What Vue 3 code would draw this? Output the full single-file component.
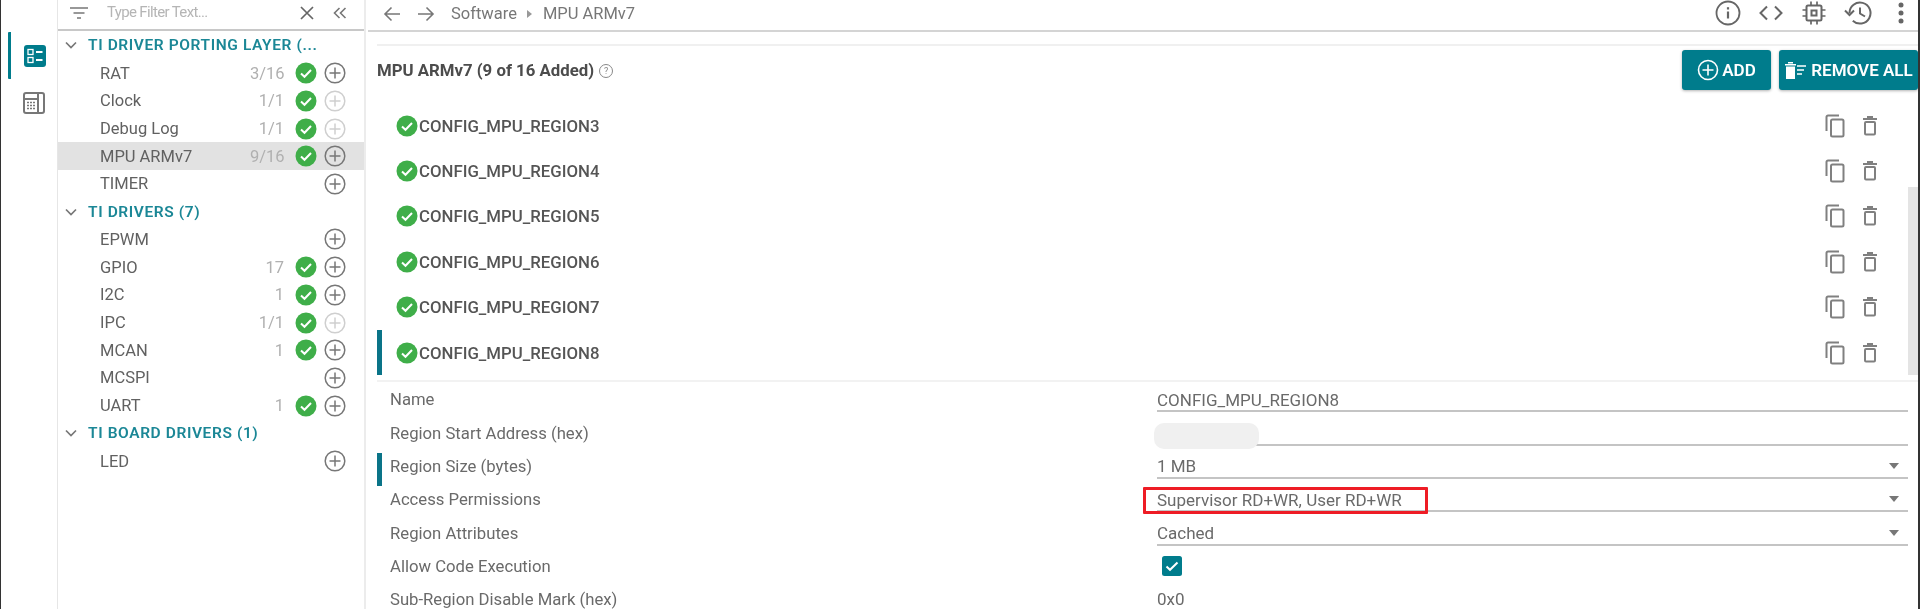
<template>
  <div class="app">
    <nav class="rail">
      <button class="rail-btn active">
        <svg width="26" height="26" viewBox="0 0 26 26">
          <rect x="2" y="2" width="22" height="22" rx="3" fill="#007c8c" />
          <rect x="6" y="6.500" width="5" height="5" fill="none" stroke="#fff" stroke-width="1.300" />
          <rect x="6" y="14.500" width="5" height="5" fill="none" stroke="#fff" stroke-width="1.300" />
          <path d="M14 9h6.500M14 17h6.500" stroke="#fff" stroke-width="1.800" />
        </svg>
      </button>
      <button class="rail-btn">
        <svg width="26" height="26" viewBox="0 0 26 26" fill="none" stroke="#777" stroke-width="2">
          <rect x="3" y="3" width="20" height="20" rx="2" />
          <path d="M17 3v20M3 9h14" />
          <path d="M6 12.500h8M6 15.500h8M6 18.500h8" stroke-width="1.600" stroke-dasharray="2 1" />
        </svg>
      </button>
    </nav>

    <aside class="sidebar">
      <div class="filter">
        <svg class="filter-icon" width="20" height="14" viewBox="0 0 20 14">
          <path d="M1 2h18M4.500 7h11M8 12h4" stroke="#777" stroke-width="1.700" />
        </svg>
        <span class="filter-text">Type Filter Text...</span>
        <svg class="filter-x" width="14" height="14" viewBox="0 0 14 14">
          <path d="M1 1l12 12M13 1L1 13" stroke="#666" stroke-width="1.700" />
        </svg>
        <svg class="filter-collapse" width="14" height="12" viewBox="0 0 14 12" fill="none">
          <path d="M6.500 1L1.500 6l5 5M12.500 1l-5 5 5 5" stroke="#777" stroke-width="1.600" />
        </svg>
      </div>
      <div class="tree">
        <template v-for="group in groups" :key="group.name">
          <div class="tree-head">
            <svg width="12" height="8" viewBox="0 0 12 8" fill="none">
              <path d="M1 1.500l5 5 5-5" stroke="#777" stroke-width="1.700" />
            </svg>
            <span>{{ group.name }}</span>
          </div>
          <div
            v-for="item in group.items"
            :key="item.name"
            class="tree-row"
            :class="{ selected: item.name === 'MPU ARMv7' }"
          >
            <span class="tree-name">{{ item.name }}</span>
            <span class="tree-count">{{ item.count }}</span>
            <span class="tree-check">
              <svg v-if="item.count" width="22" height="22" viewBox="0 0 22 22">
                <circle cx="11" cy="11" r="10.500" fill="#3fae49" />
                <path d="M6 11.500l3.500 3.300L16 8" fill="none" stroke="#fff" stroke-width="2" />
              </svg>
            </span>
            <svg class="tree-plus" :class="{ faded: item.full }" width="22" height="22" viewBox="0 0 22 22" fill="none">
              <circle cx="11" cy="11" r="9.800" stroke-width="1.500" />
              <path d="M11 5.500v11M5.500 11h11" stroke-width="1.500" />
            </svg>
          </div>
        </template>
      </div>
    </aside>

    <main class="main">
      <header class="toolbar">
        <svg class="nav-arrow" width="18" height="16" viewBox="0 0 18 16" fill="none">
          <path d="M17 8H2M8.500 1.500L2 8l6.500 6.500" stroke="#777" stroke-width="1.600" />
        </svg>
        <svg class="nav-arrow" width="18" height="16" viewBox="0 0 18 16" fill="none">
          <path d="M1 8h15M9.500 1.500L16 8l-6.500 6.500" stroke="#777" stroke-width="1.600" />
        </svg>
        <span class="crumb first">Software</span>
        <svg class="crumb-sep" width="5" height="8" viewBox="0 0 5 8"><path d="M0 0l5 4-5 4z" fill="#999" /></svg>
        <span class="crumb">MPU ARMv7</span>
        <div class="tools">
          <svg width="26" height="26" viewBox="0 0 26 26" fill="none" stroke="#666">
            <circle cx="13" cy="13" r="11.500" stroke-width="1.800" />
            <path d="M13 11.500v7" stroke-width="2.200" />
            <path d="M13 7.200v2.300" stroke-width="2.200" />
          </svg>
          <svg width="26" height="20" viewBox="0 0 26 20" fill="none" stroke="#666" stroke-width="2">
            <path d="M9 3.500L2.500 10 9 16.500M17 3.500l6.500 6.500-6.500 6.500" />
          </svg>
          <svg width="26" height="26" viewBox="0 0 26 26" fill="none" stroke="#666">
            <rect x="5.500" y="5.500" width="15" height="15" rx="1.500" stroke-width="2" />
            <rect x="10.500" y="10.500" width="5" height="5" stroke-width="2" />
            <path d="M10 1.500v4M16 1.500v4M10 20.500v4M16 20.500v4M1.500 10h4M1.500 16h4M20.500 10h4M20.500 16h4" stroke-width="1.700" />
          </svg>
          <svg width="28" height="26" viewBox="0 0 28 26" fill="none" stroke="#666" stroke-width="2">
            <path d="M5.500 13a10.500 10.500 0 1 1 3.300 7.700" />
            <path d="M1 10.500l4.500 4.500 4.500-4.500" />
            <path d="M16 7.500v6l5 3" />
          </svg>
          <svg class="more" width="6" height="22" viewBox="0 0 6 22" fill="#666">
            <circle cx="3" cy="3" r="2.500" />
            <circle cx="3" cy="11" r="2.500" />
            <circle cx="3" cy="19" r="2.500" />
          </svg>
        </div>
      </header>

      <section class="content">
        <div class="title-row">
          <span class="title">MPU ARMv7 (9 of 16 Added)</span>
          <span class="help">?</span>
          <button class="action add">
            <svg width="22" height="22" viewBox="0 0 22 22" fill="none" stroke="#fff" stroke-width="1.600">
              <circle cx="11" cy="11" r="9.500" />
              <path d="M11 5.500v11M5.500 11h11" />
            </svg>
            ADD
          </button>
          <button class="action remove">
            <svg width="24" height="20" viewBox="0 0 24 20">
              <path d="M1 4h11v1.500H1zM4 2h5v1.500H4zM2 6.500h9V19H2z" fill="#fff" />
              <path d="M13 6h9M13 10h7M13 14h5" stroke="#fff" stroke-width="1.500" />
            </svg>
            REMOVE ALL
          </button>
        </div>

        <div class="regions">
          <div v-for="region in regions" :key="region" class="region" :class="{ current: region.endsWith('8') }">
            <svg width="22" height="22" viewBox="0 0 22 22">
              <circle cx="11" cy="11" r="10.500" fill="#3fae49" />
              <path d="M6 11.500l3.500 3.300L16 8" fill="none" stroke="#fff" stroke-width="2" />
            </svg>
            <span class="region-name">{{ region }}</span>
            <svg class="copy" width="20" height="24" viewBox="0 0 20 24" fill="none" stroke="#808080" stroke-width="2">
              <path d="M14 1.500H3a1.500 1.500 0 0 0-1.500 1.500v14" />
              <rect x="6" y="5.500" width="12.500" height="17" rx="1.500" />
            </svg>
            <svg class="trash" width="14" height="20" viewBox="0 0 14 20" fill="none" stroke="#808080" stroke-width="2">
              <path d="M0 3h14M4 1h6" />
              <rect x="2" y="6" width="10" height="12.500" rx="1" />
            </svg>
          </div>
          <div class="scroll-thumb"></div>
        </div>

        <div class="props">
          <div v-for="prop in props" :key="prop.label" class="prop" :class="{ marked: prop.marked }">
            <label class="prop-label">{{ prop.label }}</label>
            <div class="prop-value" :class="prop.plain ? 'plain' : 'underlined'">
              <svg v-if="prop.check" class="check" width="20" height="20" viewBox="0 0 20 20">
                <rect width="20" height="20" rx="2.500" fill="#007c8c" />
                <path d="M4.500 10.500l3.500 3.300L15.500 6.500" fill="none" stroke="#fff" stroke-width="2" />
              </svg>
              <span>{{ prop.value }}</span>
              <svg v-if="prop.select" class="caret" width="10" height="6" viewBox="0 0 10 6"><path d="M0 0h10L5 6z" fill="#777" /></svg>
              <div v-if="prop.hidden" class="blot"></div>
              <div v-if="prop.boxed" class="red-box"></div>
            </div>
          </div>
        </div>
      </section>
    </main>
  </div>
</template>

<script setup>
const groups = [
  {
    name: 'TI DRIVER PORTING LAYER (...',
    items: [
      { name: 'RAT', count: '3/16' },
      { name: 'Clock', count: '1/1', full: true },
      { name: 'Debug Log', count: '1/1', full: true },
      { name: 'MPU ARMv7', count: '9/16' },
      { name: 'TIMER', count: '' },
    ],
  },
  {
    name: 'TI DRIVERS (7)',
    items: [
      { name: 'EPWM', count: '' },
      { name: 'GPIO', count: '17' },
      { name: 'I2C', count: '1' },
      { name: 'IPC', count: '1/1', full: true },
      { name: 'MCAN', count: '1' },
      { name: 'MCSPI', count: '' },
      { name: 'UART', count: '1' },
    ],
  },
  {
    name: 'TI BOARD DRIVERS (1)',
    items: [{ name: 'LED', count: '' }],
  },
]

const regions = [3, 4, 5, 6, 7, 8].map((n) => 'CONFIG_MPU_REGION' + n)

const props = [
  { label: 'Name', value: 'CONFIG_MPU_REGION8' },
  { label: 'Region Start Address (hex)', value: '', hidden: true },
  { label: 'Region Size (bytes)', value: '1 MB', select: true, marked: true },
  { label: 'Access Permissions', value: 'Supervisor RD+WR, User RD+WR', select: true, boxed: true },
  { label: 'Region Attributes', value: 'Cached', select: true },
  { label: 'Allow Code Execution', value: '', check: true, plain: true },
  { label: 'Sub-Region Disable Mark (hex)', value: '0x0', plain: true },
]
</script>

<style>
html,
body {
  margin: 0;
  background: #fff;
}
</style>

<style scoped>
.app {
  display: flex;
  width: 1920px;
  height: 609px;
  box-sizing: border-box;
  overflow: hidden;
  background: #fff;
  border-left: 1px solid #333;
  border-right: 2px solid #333;
  font-family: Roboto, "Liberation Sans", sans-serif;
  font-size: 16px;
  color: #666;
  filter: blur(0.6px);
}

.rail {
  width: 57px;
  flex: none;
  padding-top: 32px;
  box-sizing: border-box;
  border-right: 1px solid #e6e6e6;
}

.rail-btn {
  display: flex;
  align-items: center;
  justify-content: center;
  width: 100%;
  height: 47px;
  padding: 0 0 0 10px;
  border: 0;
  background: none;
  box-sizing: border-box;
}

.rail-btn.active {
  border-left: 3px solid #007c8c;
  margin-left: 7px;
  width: 50px;
  padding-left: 0;
  padding-right: 0;
  border-radius: 1px;
}

.sidebar {
  width: 306px;
  flex: none;
  border-right: 2px solid #ececec;
}

.filter {
  display: flex;
  align-items: center;
  height: 31px;
  padding: 0 0 3px 11px;
  box-sizing: border-box;
  border-bottom: 2px solid #c8c8c8;
}

.filter-text {
  flex: none;
  margin-left: 18px;
  margin-bottom: 2px;
  width: 186px;
  font-size: 15px;
  letter-spacing: -0.650px;
  color: #b5b5b5;
}

.filter-x {
  margin-left: 7px;
}

.filter-collapse {
  margin-left: 19px;
}

.tree {
  padding-top: 0.500px;
}

.tree-head {
  display: flex;
  align-items: center;
  height: 27.730px;
  padding-left: 7px;
  gap: 11px;
  font-size: 15.500px;
  font-weight: 600;
  letter-spacing: 0.600px;
  color: #1b8796;
}

.tree-row {
  display: flex;
  align-items: center;
  height: 27.730px;
  padding-left: 42px;
}

.tree-row.selected {
  background: #e2e2e2;
}

.tree-name {
  width: 150px;
  font-size: 16.500px;
  color: #616161;
}

.tree-count {
  width: 34px;
  text-align: right;
  font-size: 16.500px;
  color: #b0b0b0;
  white-space: nowrap;
}

.tree-check {
  display: flex;
  width: 22px;
  height: 22px;
  margin-left: 11px;
}

.tree-plus {
  margin-left: 7px;
  stroke: #777;
}

.tree-plus.faded {
  stroke: #cfcfcf;
}

.main {
  flex: 1;
  min-width: 0;
  display: flex;
  flex-direction: column;
}

.toolbar {
  display: flex;
  align-items: center;
  height: 33px;
  padding: 0 0 4px 15px;
  margin-left: 2px;
  box-sizing: border-box;
  border-bottom: 2px solid #d4d4d4;
}

.nav-arrow {
  margin-right: 10px;
  flex: none;
  margin-top: 2px;
}

.nav-arrow + .nav-arrow {
  margin-right: 0;
  margin-left: 6px;
}

.crumb {
  font-size: 16.500px;
  color: #777;
}

.crumb.first {
  margin-left: 16px;
}

.crumb-sep {
  margin: 2px 11px 0 10px;
}

.tools {
  display: flex;
  align-items: center;
  gap: 17px;
  margin-left: auto;
  margin-right: 14px;
}

.more {
  margin-left: 9px;
}

.content {
  padding-left: 11px;
}

.title-row {
  display: flex;
  align-items: center;
  height: 46px;
  margin-top: 12px;
  padding-top: 1px;
  box-sizing: content-box;
  border-top: 2px solid #f0f0f0;
}

.title {
  font-size: 16.800px;
  font-weight: 700;
  color: #4c4c4c;
}

.help {
  width: 12px;
  height: 12px;
  margin-left: 5px;
  margin-top: 2px;
  border: 1px solid #888;
  border-radius: 50%;
  font-size: 9px;
  line-height: 12px;
  text-align: center;
  color: #888;
}

.action {
  display: flex;
  align-items: center;
  justify-content: center;
  height: 40px;
  border: 0;
  border-radius: 3px;
  background: #007c8c;
  box-shadow: 0 1px 3px rgba(0, 0, 0, 0.3);
  color: #fff;
  font-family: inherit;
  font-size: 17px;
  font-weight: 600;
  gap: 3px;
  padding: 0;
  white-space: nowrap;
}

.add {
  width: 89px;
  margin-left: auto;
}

.remove {
  width: 139px;
  margin-left: 8px;
}

.regions {
  position: relative;
  padding-top: 10px;
}

.region {
  display: flex;
  align-items: center;
  height: 45.400px;
  padding-left: 19px;
  gap: 1px;
}

.region-name {
  flex: 1;
  font-size: 16.800px;
  font-weight: 500;
  color: #555;
}

.region.current {
  box-shadow: inset 5px 0 0 #0a7488;
}

.copy {
  margin-right: 17px;
}

.trash {
  margin-right: 41px;
}

.scroll-thumb {
  position: absolute;
  top: 94px;
  right: 0;
  width: 10px;
  height: 188px;
  background: #e4e4e4;
}

.props {
  margin-top: 5px;
  padding-top: 4px;
  border-top: 2px solid #f2f2f2;
}

.prop {
  display: flex;
  height: 33.300px;
  align-items: flex-start;
}

.prop.marked {
  box-shadow: inset 5px 0 0 #0a7488;
}

.prop-label {
  width: 780px;
  padding: 6px 0 0 13px;
  box-sizing: border-box;
  line-height: 16px;
  font-size: 16.700px;
  color: #6a6a6a;
  white-space: nowrap;
}

.prop-value {
  position: relative;
  display: flex;
  align-items: center;
  flex: 1;
  height: 26px;
  padding-top: 3px;
  margin-right: 10px;
  box-sizing: border-box;
  font-size: 17px;
  line-height: 16px;
  color: #6a6a6a;
}

.prop-value.underlined {
  border-bottom: 2px solid #c4c4c4;
}

.prop-value.plain {
  height: 21px;
  padding-top: 5px;
}

.check {
  margin-left: 5px;
}

.caret {
  position: absolute;
  right: 9px;
  top: 10px;
}

.blot {
  position: absolute;
  left: -3px;
  top: 3px;
  width: 105px;
  height: 26px;
  border-radius: 10px;
  background: #f0f0f0;
}

.red-box {
  position: absolute;
  left: -14px;
  top: 1px;
  width: 285px;
  height: 27px;
  box-sizing: border-box;
  border: 3px solid #ee1c25;
  border-radius: 1px;
}
</style>
